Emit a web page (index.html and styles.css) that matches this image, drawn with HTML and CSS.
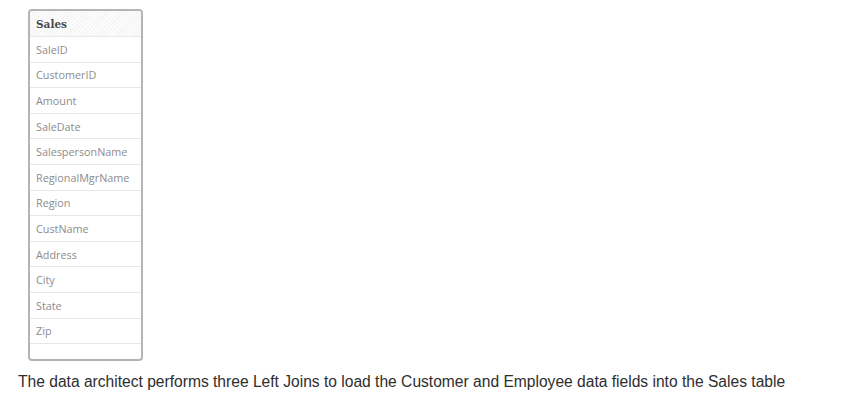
FILE: index.html
```html
<!DOCTYPE html>
<html>
<head>
<meta charset="utf-8">
<link rel="stylesheet" href="styles.css">
</head>
<body>
<div class="table-card">
  <div class="table-head">Sales</div>
  <ul class="fields">
    <li>SaleID</li>
    <li>CustomerID</li>
    <li>Amount</li>
    <li>SaleDate</li>
    <li>SalespersonName</li>
    <li>RegionalMgrName</li>
    <li>Region</li>
    <li>CustName</li>
    <li>Address</li>
    <li>City</li>
    <li>State</li>
    <li>Zip</li>
    <li class="empty"></li>
  </ul>
</div>
<p class="caption">The data architect performs three Left Joins to load the Customer and Employee data fields into the Sales table</p>
</body>
</html>
```
FILE: styles.css
```css
html, body {
  margin: 0;
  padding: 0;
  background: #ffffff;
}
body {
  width: 866px;
  height: 410px;
  overflow: hidden;
}
.table-card {
  margin: 9px 0 0 28px;
  width: 111px;
  height: 348px;
  border: 2px solid #b4b4b4;
  border-radius: 4px;
  background: #fff;
  display: flex;
  flex-direction: column;
  overflow: hidden;
}
.table-head {
  height: 25px;
  flex: none;
  padding-left: 6px;
  display: flex;
  align-items: center;
  font-family: "DejaVu Serif", "Liberation Serif", serif;
  font-weight: bold;
  font-size: 10.5px;
  color: #4a4a4a;
  background-color: #f5f5f5;
  background-image: repeating-linear-gradient(45deg, #fcfcfc 0 1px, transparent 1px 3px), repeating-linear-gradient(-45deg, #fcfcfc 0 1px, transparent 1px 3px);
  border-bottom: 1px solid #e8e8e8;
}
.fields {
  list-style: none;
  margin: 0;
  padding: 0;
}
.fields li {
  height: 24.6px;
  border-bottom: 1px solid #e6e6e6;
  padding-left: 6px;
  display: flex;
  align-items: center;
  font-family: "Open Sans", "Liberation Sans", sans-serif;
  font-size: 10.8px;
  color: #8c8c8c;
}
.caption {
  margin: 12px 0 0 18px;
  font-family: "Liberation Sans", Arial, sans-serif;
  font-size: 15.6px;
  color: #2e2e2e;
}
```
